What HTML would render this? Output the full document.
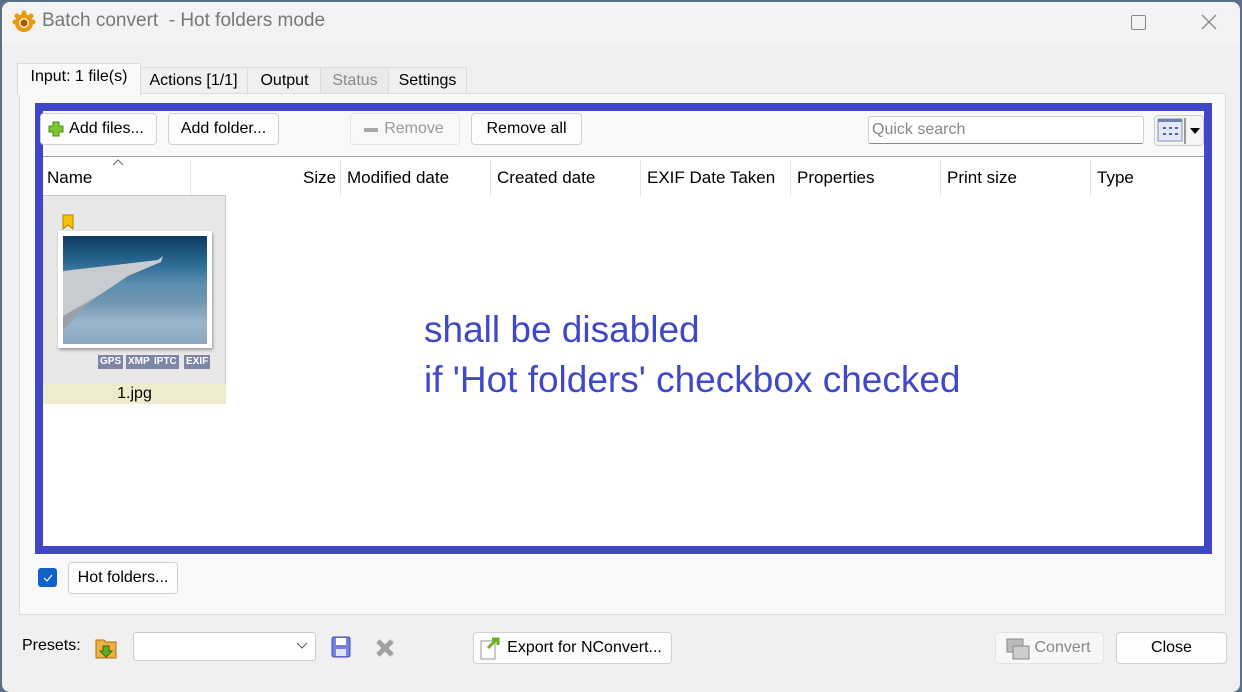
<!DOCTYPE html>
<html><head><meta charset="utf-8"><style>
*{box-sizing:border-box;margin:0;padding:0}
body{width:1242px;height:684px;overflow:hidden;background:#5a7088;font-family:"Segoe UI","Liberation Sans",sans-serif;font-size:16px;color:#000;position:relative}
.win{position:absolute;left:2px;top:2px;width:1238px;height:690px;background:#f0f0f0;border-radius:8px;overflow:hidden}
.title{position:absolute;left:0;top:0;width:100%;height:43px;background:#f3f3f3}
.a{position:absolute}
.btn{position:absolute;background:#fdfdfd;border:1px solid #d0d0d0;border-radius:4px;height:32px;line-height:30px;text-align:center;font-size:16px}
.tab{position:absolute;top:65px;height:27px;line-height:26px;text-align:center;border:1px solid #dcdcdc;background:#f0f0f0;font-size:16px}
.hd{position:absolute;top:166px;font-size:17px}
.sep{position:absolute;top:158px;width:1px;height:36px;background:#e4e4e4}
.tag{position:absolute;top:353px;height:14px;background:#7e86a8;color:#fff;font-size:10px;font-weight:bold;line-height:14px;padding:0 2px}
</style></head><body>
<div class="win">
<div class="title"></div>
<svg class="a" style="left:10px;top:8px" width="24" height="24" viewBox="0 0 24 24"><g fill="#e89a10"><circle cx="12" cy="13" r="9"/><circle cx="5" cy="6" r="2.5"/><circle cx="12" cy="3" r="2.5"/><circle cx="19" cy="6" r="2.5"/><circle cx="3" cy="12" r="2.5"/><circle cx="21" cy="12" r="2.5"/></g><circle cx="12" cy="13" r="5" fill="#fff3d0"/><circle cx="12" cy="13" r="3.5" fill="#b05a00"/></svg>
<div class="a" style="left:40px;top:8px;font-size:19px;color:#777">Batch convert &nbsp;- Hot folders mode</div>
<div class="a" style="left:1129px;top:13px;width:15px;height:15px;border:1.5px solid #888;border-radius:2px"></div>
<svg class="a" style="left:1199px;top:12px" width="16" height="16"><path d="M1 1L15 15M15 1L1 15" stroke="#888" stroke-width="1.3"/></svg>
<div class="tab" style="left:15px;top:61px;height:32px;width:124px;background:#f9f9f9;border-bottom:none;z-index:2">Input: 1 file(s)</div>
<div class="tab" style="left:137px;width:109px">Actions [1/1]</div>
<div class="tab" style="left:245px;width:75px">Output</div>
<div class="tab" style="left:318px;width:70px;color:#888;background:#eaeaea">Status</div>
<div class="tab" style="left:386px;width:79px">Settings</div>
<div class="a" style="left:17px;top:91px;width:1207px;height:522px;background:#f9f9f9;border:1px solid #dcdcdc"></div>
<div class="a" style="left:33px;top:101px;width:1177px;height:451px;border:8px solid #4046c8;background:#fff"></div>
<div class="a" style="left:41px;top:109px;width:1161px;height:46px;background:#f9f9f9;border-bottom:1px solid #a0a0a0"></div>
<div class="btn" style="left:38px;top:111px;width:117px;padding-left:16px">Add files...</div>
<svg class="a" style="left:46px;top:119px" width="16" height="16"><path d="M5 1h6v4h4v6h-4v4H5v-4H1V5h4z" fill="#7cc52a" stroke="#4a8a10"/></svg>
<div class="btn" style="left:166px;top:111px;width:111px">Add folder...</div>
<div class="btn" style="left:348px;top:111px;width:110px;color:#999;background:#f9f9f9;border-color:#e4e4e4;padding-left:18px">Remove</div>
<div class="a" style="left:362px;top:126px;width:14px;height:4px;background:#a8a8a8"></div>
<div class="btn" style="left:469px;top:111px;width:111px">Remove all</div>
<div class="a" style="left:866px;top:114px;width:276px;height:28px;background:#fff;border:1px solid #d0d0d0;border-bottom-color:#888;border-radius:3px;color:#888;font-size:16px;line-height:26px;padding-left:3px">Quick search</div>
<div class="a" style="left:1152px;top:113px;width:50px;height:31px;background:#f5f5f5;border:1px solid #ccc;border-radius:4px"></div>
<svg class="a" style="left:1155px;top:116px" width="45" height="26"><rect x="1" y="1" width="24" height="22" fill="#e4e8f4" stroke="#8890b0"/><rect x="1" y="1" width="24" height="3" fill="#7080b0"/><g fill="#4860d0"><rect x="6" y="9" width="3" height="2"/><rect x="12" y="9" width="3" height="2"/><rect x="18" y="9" width="3" height="2"/><rect x="6" y="15" width="3" height="2"/><rect x="12" y="15" width="3" height="2"/><rect x="18" y="15" width="3" height="2"/></g><rect x="27" y="0" width="2" height="26" fill="#999"/><path d="M33 10h10l-5 6z" fill="#000"/></svg>
<svg class="a" style="left:109px;top:156px" width="14" height="8"><path d="M2 7l5-5 5 5" fill="none" stroke="#666"/></svg>
<div class="hd" style="left:45px">Name</div>
<div class="sep" style="left:188px"></div>
<div class="hd" style="left:301px">Size</div>
<div class="sep" style="left:338px"></div>
<div class="hd" style="left:345px">Modified date</div>
<div class="sep" style="left:488px"></div>
<div class="hd" style="left:495px">Created date</div>
<div class="sep" style="left:638px"></div>
<div class="hd" style="left:645px">EXIF Date Taken</div>
<div class="sep" style="left:788px"></div>
<div class="hd" style="left:795px">Properties</div>
<div class="sep" style="left:938px"></div>
<div class="hd" style="left:945px">Print size</div>
<div class="sep" style="left:1088px"></div>
<div class="hd" style="left:1095px">Type</div>
<div class="a" style="left:41px;top:193px;width:183px;height:208px;background:#e8e8e8;border:1px solid #c8c8c8;border-left:none"></div>
<div class="a" style="left:41px;top:382px;width:183px;height:20px;background:#eeeccc;text-align:center;font-size:16px;line-height:20px">1.jpg</div>
<svg class="a" style="left:60px;top:212px" width="12" height="16"><path d="M1 1h10v14l-5-4-5 4z" fill="#f5c400" stroke="#c08000"/></svg>
<div class="a" style="left:56px;top:229px;width:154px;height:117px;background:#fff;box-shadow:1px 2px 3px #999"></div>
<div class="a" style="left:61px;top:234px;width:144px;height:108px;background:linear-gradient(180deg,#0e3a5e 0%,#2a6a92 25%,#5d8fb0 45%,#6e95b0 60%,#9ab6cc 80%,#8aa8c0 100%)"></div>
<svg class="a" style="left:61px;top:234px" width="144" height="108"><path d="M0 35L95 24L100 20L98 26L65 40L35 60L0 80z" fill="#c8ccd0"/><path d="M0 80L35 60L20 72L0 95z" fill="#9aa0a8"/></svg>
<div class="tag" style="left:96px">GPS</div><div class="tag" style="left:124px">XMP</div><div class="tag" style="left:150px">IPTC</div><div class="tag" style="left:182px">EXIF</div>
<div class="a" style="left:422px;top:303px;color:#4048c8;font-size:37px;line-height:50px;white-space:nowrap">shall be disabled<br>if 'Hot folders' checkbox checked</div>
<div class="a" style="left:36px;top:566px;width:19px;height:19px;background:#0f63c8;border-radius:3px"></div>
<svg class="a" style="left:39px;top:569px" width="13" height="13"><path d="M3 7l3 3 5-6" fill="none" stroke="#fff" stroke-width="1.2"/></svg>
<div class="btn" style="left:66px;top:560px;width:110px">Hot folders...</div>
<div class="a" style="left:20px;top:635px;font-size:16px">Presets:</div>
<svg class="a" style="left:92px;top:634px" width="24" height="24"><path d="M2 4h8l2 2h10v16H2z" fill="#f0b040" stroke="#b07010"/><path d="M9 10h6v5h3l-6 6-6-6h3z" fill="#60b020" stroke="#2a7010"/></svg>
<div class="a" style="left:131px;top:630px;width:183px;height:29px;background:#fff;border:1px solid #ccc;border-radius:3px"></div>
<svg class="a" style="left:294px;top:640px" width="12" height="8"><path d="M1 1l5 5 5-5" fill="none" stroke="#555"/></svg>
<svg class="a" style="left:329px;top:634px" width="20" height="22"><rect x="1" y="1" width="18" height="20" rx="2" fill="#7a80e0" stroke="#4048b0"/><rect x="5" y="2" width="10" height="7" fill="#fff"/><rect x="5" y="13" width="10" height="7" fill="#e0e4ff"/></svg>
<svg class="a" style="left:373px;top:636px" width="20" height="20"><path d="M3 3L17 17M17 3L3 17" stroke="#a0a0a0" stroke-width="5"/></svg>
<div class="btn" style="left:471px;top:630px;width:199px;padding-left:24px">Export for NConvert...</div>
<svg class="a" style="left:478px;top:634px" width="22" height="24"><rect x="1" y="5" width="14" height="18" fill="#fff" stroke="#999"/><path d="M8 12l9-9M12 3h6v6" fill="none" stroke="#70b020" stroke-width="3"/></svg>
<div class="btn" style="left:993px;top:630px;width:109px;color:#888;background:#f7f7f7;border-color:#e4e4e4;padding-left:26px">Convert</div>
<svg class="a" style="left:1004px;top:636px" width="24" height="22"><rect x="1" y="1" width="16" height="13" fill="#bbb" stroke="#888"/><rect x="7" y="8" width="16" height="13" fill="#ccc" stroke="#888"/></svg>
<div class="btn" style="left:1114px;top:630px;width:111px">Close</div>
</div>
</body></html>
